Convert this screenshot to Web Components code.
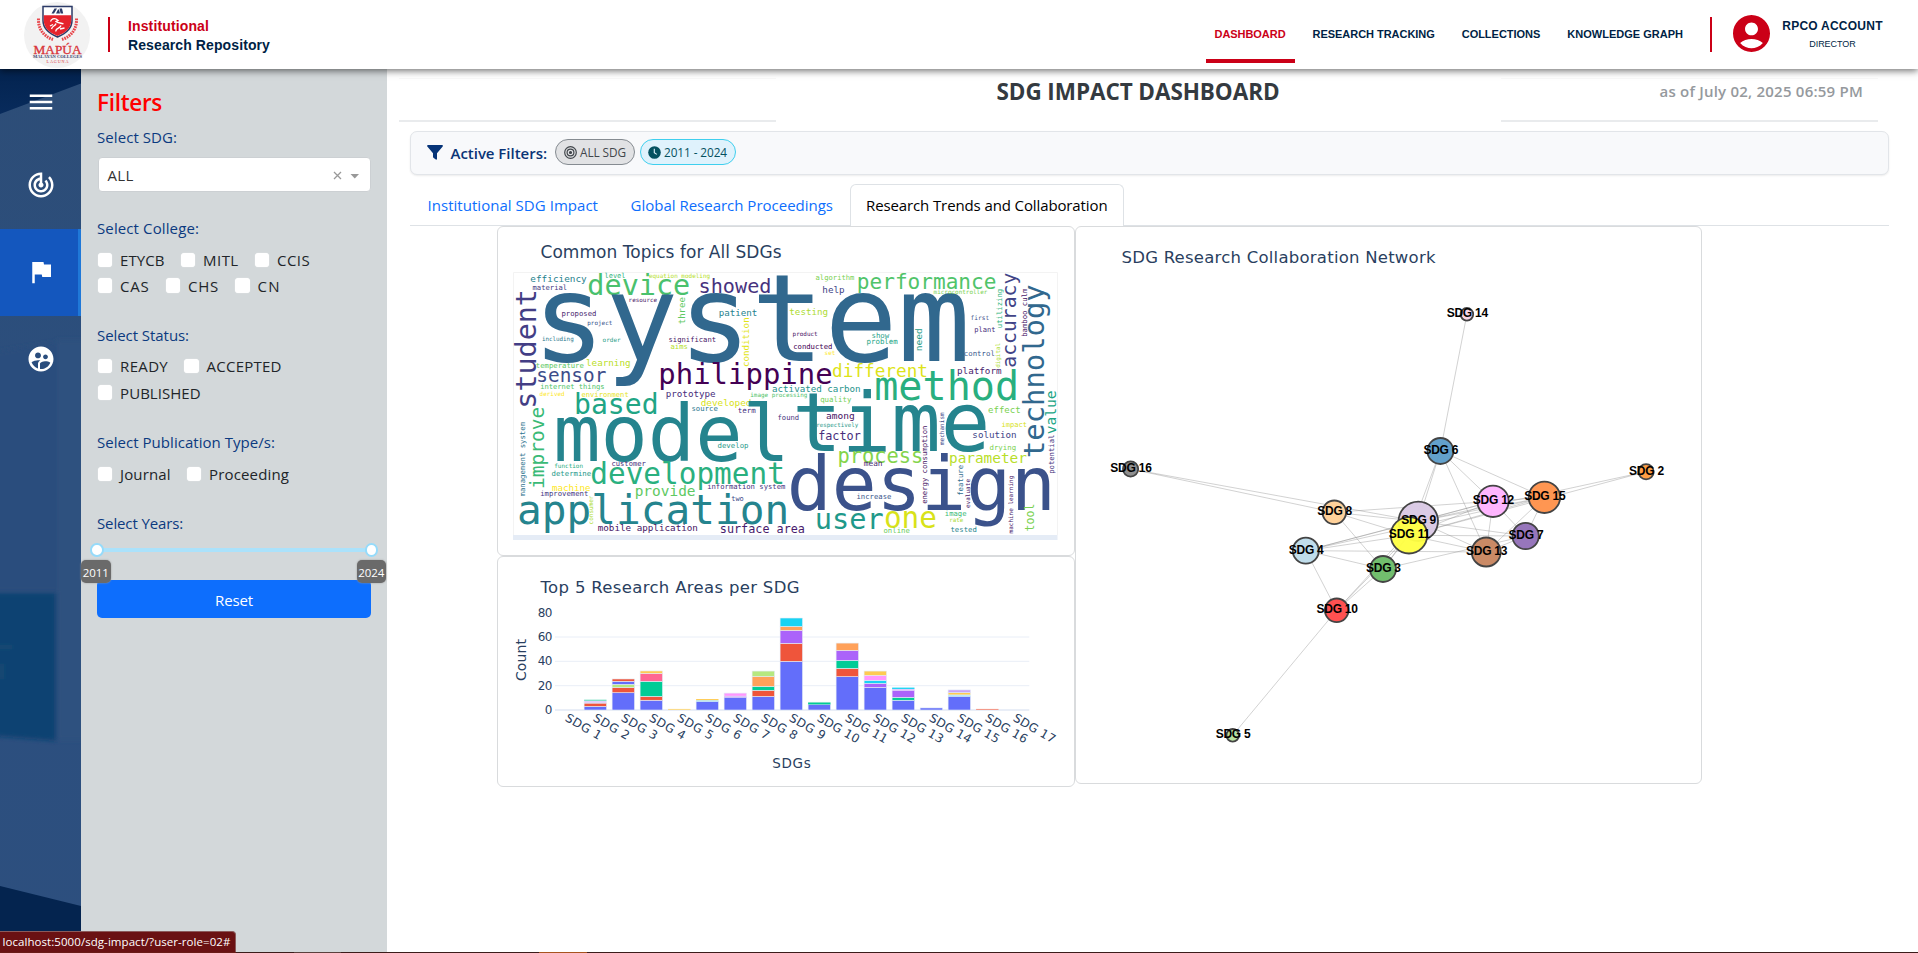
<!DOCTYPE html>
<html lang="en">
<head>
<meta charset="utf-8">
<title>SDG Impact Dashboard</title>
<style>
html,body{margin:0;height:100%;overflow:hidden;background:#fff;font-family:"Open Sans","Noto Sans",sans-serif}
</style>
</head>
<body>
<app-shell></app-shell>
<script>
const define = (name, html, after) => customElements.define(name, class extends HTMLElement {
  connectedCallback() {
    if (this.shadowRoot) return;
    const t = document.createElement('template');
    t.innerHTML = html;
    this.attachShadow({mode: 'open'}).append(t.content.cloneNode(true));
    if (after) after.call(this, this.shadowRoot);
  }
});

/* Label tracked to an exact width given in w. */
define('fit-text', `<style>:host{display:inline-block;white-space:nowrap}</style><slot></slot>`, function () {
  const w = +this.getAttribute('w');
  if (w) {
    this.style.letterSpacing = (w - this.getBoundingClientRect().width) / this.textContent.length + 'px';
    this.style.width = w + 'px';
  }
});

define('brand-logo', `<style>:host{display:block;width:66px;height:69px;overflow:hidden}svg{display:block}</style>
<svg width="66" height="69" viewBox="24 0 66 69">
<circle cx="57" cy="35" r="33" fill="#f2f2f2"/>
<path d="M43 6.500h29v14c0 8-6 13-14.500 16.500C49 33.500 43 28.500 43 20.500z" fill="#fff" stroke="#2b3a67" stroke-width="1.500"/>
<path d="M43.800 15.300h27.400v5.500c0 7-5.400 11.800-13.700 15.200-8.300-3.400-13.700-8.200-13.700-15.200z" fill="#e5232c"/>
<path d="M51.500 13.500l3-5h2.500l-3 5zM56 13.500l2-4h1l1 4zM59.500 8.500h2.500l1.200 5h-2.600z" fill="#2b3a67"/>
<path d="M50.500 21.500c1-2.500 3.500-3.500 5.500-2.500l2 1.500-2 1c2 2 5 1 7.500 2.500M51.500 29c1-3.500 4-3 4.500-5.500M56 31.500c-1-3.500 4-2.500 5-6M60 29l4.500-1M53 24.500l-3 1.500" fill="none" stroke="#fff" stroke-width="1.300"/>
<g fill="none" stroke="#e8474c" stroke-width="3" stroke-dasharray="1.700 .9"><path d="M38.500 18.500c-.5 9 4 17.500 14.500 21"/><path d="M76.500 18.500c.5 9-4 17.500-14.500 21"/></g>
<text x="33.500" y="53.500" font-family="Liberation Serif" font-size="12.500" fill="#d8343a" stroke="#d8343a" stroke-width=".3" textLength="48" lengthAdjust="spacingAndGlyphs">MAPÚA</text>
<text x="33" y="58.300" font-family="Liberation Serif" font-size="5" font-weight="bold" fill="#39446d" textLength="49" lengthAdjust="spacingAndGlyphs">MALAYAN COLLEGES</text>
<text x="46.500" y="62.500" font-family="Liberation Serif" font-size="4.200" fill="#d8343a" textLength="22">LAGUNA</text>
</svg>`);

define('top-bar', `<style>
:host{display:flex;height:69px;box-sizing:border-box;align-items:flex-start;background:#fff;box-shadow:0 2px 7px rgba(0,0,0,.55);position:relative;z-index:2;font-family:"Liberation Sans",Arial,sans-serif;color:#001f45;padding-left:24px}
.bar{width:2px;height:35px;background:#cb0017;margin-top:17px}
.brand{margin:17px 0 0 18px;font-weight:700;font-size:14px;line-height:19px;display:flex;flex-direction:column;align-items:flex-start}
.brand .r{color:#cb0017}
nav{margin-left:auto;display:flex;gap:9px;font-size:11px;font-weight:700;line-height:69px;height:69px}
nav a{padding:0 9px;height:59px}
nav a.on{color:#cb0017;border-bottom:4px solid #cb0017}
.who{margin:17px 35px 0 12px;width:101px;text-align:center;line-height:18px;display:flex;flex-direction:column;align-items:center}
</style>
<brand-logo></brand-logo><div class="bar" style="margin-left:18px"></div>
<div class="brand"><fit-text class="r" w="81">Institutional</fit-text><fit-text w="142">Research Repository</fit-text></div>
<nav><a class="on"><fit-text w="71">DASHBOARD</fit-text></a><a><fit-text w="122.200">RESEARCH TRACKING</fit-text></a><a><fit-text w="78.600">COLLECTIONS</fit-text></a><a><fit-text w="115.700">KNOWLEDGE GRAPH</fit-text></a></nav>
<div class="bar" style="margin-left:17.500px"></div>
<svg style="margin:15px 0 0 21.500px" width="37" height="37" viewBox="2 2 20 20"><path fill="#cb0017" d="M12 2C6.480 2 2 6.480 2 12s4.480 10 10 10 10-4.480 10-10S17.520 2 12 2zm0 4c1.930 0 3.500 1.570 3.500 3.500S13.930 13 12 13s-3.500-1.570-3.500-3.500S10.070 6 12 6zm0 14c-2.030 0-4.430-.820-6.140-2.880C7.550 15.800 9.680 15 12 15s4.450.8 6.140 2.120C16.430 19.180 14.030 20 12 20z"/></svg>
<div class="who"><fit-text style="font-size:12px;font-weight:700" w="100.500">RPCO ACCOUNT</fit-text><fit-text style="font-size:9px" w="46.500">DIRECTOR</fit-text></div>`);

define('rail-item', `<style>
:host{display:flex;height:87px;width:81px;box-sizing:border-box;align-items:center;justify-content:center;fill:#fff}
:host([active]){background:#1457be;border-right:3px solid #1f78d8}
</style><svg width="30" height="30" viewBox="0 0 24 24"><path></path></svg>`, function (r) {
  r.querySelector('path').setAttribute('d', this.getAttribute('d'));
});

define('side-rail', `<style>
:host{display:flex;flex-direction:column;width:81px;position:relative;overflow:hidden;background:#2c4f7b}
.bg{position:absolute;inset:0}
rail-item{position:relative}
</style>
<svg class="bg" width="81" height="884" viewBox="0 69 81 884">
<defs><linearGradient id="t" x2="0" y2="1"><stop offset="0" stop-color="#03234f"/><stop offset="1" stop-color="#082b5c"/></linearGradient>
<linearGradient id="m" x2="0" y2="1"><stop offset="0" stop-color="#2d4d77"/><stop offset=".5" stop-color="#2b4f7f"/><stop offset="1" stop-color="#2d4f7e"/></linearGradient>
<filter id="b"><feGaussianBlur stdDeviation="2"/></filter></defs>
<rect y="69" width="81" height="884" fill="url(#m)"/>
<g filter="url(#b)"><path d="M-5 352l62-10v250H-5z" fill="#2a4e7d"/><path d="M57 340h30v400H57z" fill="#2f517f"/><path d="M-5 593h61v148L-5 736z" fill="#0f4272"/><path d="M-2 645h14v4H-2zM-2 664h6v15h-6z" fill="#174972"/></g>
<path d="M0 69h81v14.500L0 114z" fill="url(#t)"/><path d="M0 886l81 20v47H0z" fill="#04244f"/>
</svg>
<rail-item style="height:66px" d="M3 18h18v-2H3v2zm0-5h18v-2H3v2zm0-7v2h18V6H3z"></rail-item>
<rail-item style="height:94px;padding:6px 0 0 1px" d="M19.070 4.930l-1.410 1.410C19.100 7.790 20 9.790 20 12c0 4.420-3.580 8-8 8s-8-3.580-8-8c0-4.080 3.050-7.440 7-7.930v2.020C8.160 6.570 6 9.030 6 12c0 3.310 2.690 6 6 6s6-2.690 6-6c0-1.660-.670-3.160-1.760-4.240l-1.410 1.410C15.550 9.900 16 10.900 16 12c0 2.210-1.790 4-4 4s-4-1.790-4-4c0-1.860 1.280-3.410 3-3.860v2.140c-.6.350-1 .980-1 1.720 0 1.100.9 2 2 2s2-.9 2-2c0-.740-.4-1.380-1-1.720V2h-1C6.480 2 2 6.480 2 12s4.480 10 10 10 10-4.480 10-10c0-2.760-1.120-5.260-2.930-7.070z"></rail-item>
<rail-item active style="padding:0 0 1px 4px" d="M14.400 6L14 4H5v17h2v-7h5.600l.4 2h7V6z"></rail-item>
<rail-item style="padding:0 0 1px 1px" d="M11.990 2c-5.520 0-10 4.480-10 10s4.480 10 10 10 10-4.480 10-10-4.480-10-10-10zm3.610 6.340c1.070 0 1.930.860 1.930 1.930 0 1.070-.860 1.930-1.930 1.930-1.070 0-1.930-.860-1.930-1.930-.010-1.070.860-1.930 1.930-1.930zm-6-1.580c1.300 0 2.360 1.060 2.360 2.360 0 1.300-1.060 2.360-2.360 2.360s-2.360-1.060-2.360-2.360c0-1.310 1.050-2.360 2.360-2.360zm0 9.130v3.750c-2.400-.750-4.300-2.600-5.140-4.960 1.050-1.120 3.670-1.690 5.140-1.690.530 0 1.200.080 1.900.220-1.640.870-1.900 2.020-1.900 2.680zM11.990 20c-.270 0-.530-.010-.790-.040v-4.070c0-1.420 2.940-2.130 4.400-2.130 1.070 0 2.920.390 3.840 1.150-1.170 2.970-4.060 5.090-7.450 5.090z"></rail-item>`);

define('check-item', `<style>
:host{display:flex;align-items:center;gap:8px;margin-right:16px;color:#212529}
i{width:14.500px;height:14.500px;box-sizing:border-box;background:#fff;border-radius:3.500px;box-shadow:0 0 1px #fff}
</style><i></i><fit-text></fit-text>`, function (r) {
  const f = r.querySelector('fit-text'), n = document.createElement('fit-text');
  n.setAttribute('w', this.getAttribute('w')); n.textContent = this.getAttribute('label'); f.replaceWith(n);
});

define('filter-panel', `<style>
:host{display:block;width:306px;box-sizing:border-box;background:#d3d8da;padding:19px 16px 0;font-size:15px}
h2{margin:0;font-size:22.500px;line-height:30px;font-weight:600;color:#f00}
label{display:block;height:24px;line-height:24px;color:#0b3a80;margin-top:24px}
.row{display:flex;height:26px;align-items:center;padding-left:.6px}
.sel{display:flex;align-items:center;height:35px;box-sizing:border-box;margin:8px 0 0 .5px;width:273px;border:1px solid #ccd0d3;border-radius:4px;background:#fff;color:#333;padding:0 10.500px 0 9px}
.slider{position:relative;height:45px}
.track{position:absolute;left:0;right:0;top:13px;height:3.500px;background:#abe2fb}
.h{position:absolute;top:8px;width:9.500px;height:9.500px;border:2px solid #96dbfa;border-radius:50%;background:#fff}
.tip{position:absolute;top:24.500px;width:29.500px;height:23.500px;background:#6a6a6a;border-radius:5px;color:#fff;font-size:11.500px;line-height:25px;text-align:center;z-index:1;box-shadow:0 0 2px #999}
button{display:block;width:274px;height:38px;border:0;border-radius:5px;background:#0d6efd;color:#fff;font:15px "Open Sans";padding-top:2px}
</style>
<h2><fit-text w="65">Filters</fit-text></h2>
<label style="margin-top:7px"><fit-text w="80">Select SDG:</fit-text></label>
<div class="sel"><fit-text w="26">ALL</fit-text>
<svg style="margin-left:auto" width="26" height="12" viewBox="0 0 26 12"><path d="M1 3l7 7M8 3l-7 7" stroke="#999" stroke-width="1.300"/><path d="M17.500 5h8.500l-4.250 4.500z" fill="#999"/></svg></div>
<label><fit-text w="102">Select College:</fit-text></label>
<div class="row" style="margin-top:7px"><check-item label="ETYCB" w="44.500"></check-item><check-item label="MITL" w="35.500"></check-item><check-item label="CCIS" w="33"></check-item></div>
<div class="row" style="height:25px"><check-item label="CAS" w="29.500"></check-item><check-item label="CHS" w="31"></check-item><check-item label="CN" w="23"></check-item></div>
<label style="margin-top:25px"><fit-text w="92">Select Status:</fit-text></label>
<div class="row" style="margin-top:6px"><check-item label="READY" w="48"></check-item><check-item label="ACCEPTED" w="75"></check-item></div>
<div class="row" style="height:27px"><check-item label="PUBLISHED" w="80.500"></check-item></div>
<label><fit-text w="178">Select Publication Type/s:</fit-text></label>
<div class="row" style="margin-top:7px"><check-item label="Journal" w="50.500"></check-item><check-item label="Proceeding" w="80"></check-item></div>
<label><fit-text w="86">Select Years:</fit-text></label>
<div class="slider"><div class="track"></div><div class="h" style="left:-7px"></div><div class="h" style="right:-7px"></div>
<div class="tip" style="left:-16px"><fit-text w="26">2011</fit-text></div><div class="tip" style="right:-15px"><fit-text w="26">2024</fit-text></div></div>
<button><fit-text w="38">Reset</fit-text></button>`);

define('filter-pill', `<style>
:host{display:flex;align-items:center;box-sizing:border-box;height:26px;border:1.300px solid var(--line);background:var(--fill);color:var(--ink);border-radius:13px;font-size:11.800px}
</style><slot></slot>`);

define('active-filters', `<style>
:host{display:flex;align-items:center;box-sizing:border-box;height:43.500px;background:#f8f9fb;border:1px solid #e2e5e9;border-radius:7px;margin:9.500px 29.500px 0 23px;padding:0 0 1px 15.500px;box-shadow:0 1px 2px rgba(0,0,0,.08)}
b{font-weight:600;font-size:15px;color:#0a3476;margin:1px 8px 0 8px}
svg{display:block}
</style>
<svg width="16" height="15" viewBox="0 0 16 15"><path fill="#063478" d="M1 0h14q1.400.3.700 1.600L10 8.300V14q-.3 1-1.200.6L6.400 12.700 6 12V8.300L.3 1.600Q-.3.300 1 0z"/></svg>
<b><fit-text w="96.500">Active Filters:</fit-text></b>
<filter-pill style="--line:#858b91;--fill:#e1e2e4;--ink:#41464b;width:80px;padding-left:8px;gap:3px"><svg width="13" height="13" viewBox="0 0 13 13" fill="none" stroke="#41464b" stroke-width="1.200"><circle cx="6.500" cy="6.500" r="5.800"/><circle cx="6.500" cy="6.500" r="3.400"/><circle cx="6.500" cy="6.500" r="1" fill="#41464b"/></svg><fit-text w="46">ALL SDG</fit-text></filter-pill>
<filter-pill style="--line:#3fcfee;--fill:#dff2fc;--ink:#055160;width:96px;margin-left:4.500px;padding-left:7.500px;gap:3px"><svg width="13" height="13" viewBox="0 0 13 13"><circle cx="6.500" cy="6.500" r="6.300" fill="#055160"/><path d="M6.300 2.800v4l2.500 1.600" fill="none" stroke="#dff2fc" stroke-width="1.100"/></svg><fit-text w="63">2011 - 2024</fit-text></filter-pill>`);

define('tab-strip', `<style>
:host{display:flex;box-sizing:border-box;height:42px;margin:9.500px 29.500px 0 23px;border-bottom:1px solid #dee2e6;font-size:15px;line-height:42px;color:#0d6efd}
span{padding:0 16.500px 0 17.500px}
.on{color:#000;background:#fff;border:1px solid #dee2e6;border-bottom:0;border-radius:6px 6px 0 0;padding:0 15px 0 15.500px;height:42px;box-sizing:border-box;line-height:40px}
</style><span><fit-text w="170.500">Institutional SDG Impact</fit-text></span><span style="padding-left:16px"><fit-text w="202.500">Global Research Proceedings</fit-text></span><span class="on"><fit-text w="241.500">Research Trends and Collaboration</fit-text></span>`);

define('chart-card', `<style>
:host{display:block;box-sizing:border-box;border:1px solid #d9dbdd;border-radius:6px;overflow:hidden;background:#fff}
</style><slot></slot>`);

const NS = 'http://www.w3.org/2000/svg';
const el = (p, tag, attrs, text) => {
  const e = document.createElementNS(NS, tag);
  for (const k in attrs) e.setAttribute(k, attrs[k]);
  if (text !== undefined) e.textContent = text;
  p.append(e);
  return e;
};
const chartStyle = `<style>:host{display:block}svg{display:block}text{font-family:"DejaVu Sans",Verdana,sans-serif;fill:#2a3f5f}</style>`;

/* Word: [text, start, end, baseline, colour, vertical]; three units to a pixel, one list per quadrant. */
const CLOUD = [
 [-39,-141,[
 ['efficiency',93,258,172,'#26828e'],['material',99,200,194,'#443a83'],['device',268,565,209,'#4ac16d'],['level',315,375,160,'#2fb47c'],
 ['equation modeling',448,630,158,'#b5de2b'],['showed',600,810,203,'#46327e'],['system',122,1386,409,'#31688e'],['student',198,545,107,'#433e85',1],
 ['proposed',186,288,272,'#481f70'],['project',263,336,299,'#39568c'],['resource',387,470,230,'#471365'],['three',218,296,554,'#5ec962',1],
 ['patient',658,770,274,'#26828e'],['including',127,220,348,'#2a788e'],['order',309,361,350,'#1fa088'],['significant',507,647,350,'#471365'],
 ['aims',513,562,371,'#b5de2b'],['condition',279,424,747,'#e2e418',1],['temperature',109,250,429,'#5ec962'],['learning',260,390,423,'#bade28'],
 ['sensor',113,315,470,'#3d4d8a'],['philippine',481,992,477,'#440154'],['internet things',122,312,492,'#50c46a']]],
 [801,-141,[
 ['algorithm',108,222,166,'#7ad151'],['help',129,192,203,'#414487'],['performance',235,645,191,'#50c46a'],['microcontroller',462,621,207,'#7ad151'],
 ['testing',30,142,271,'#addc30'],['first',573,626,284,'#3d4e8a'],['utilizing',193,308,667,'#2fb47c',1],['accuracy',147,424,707,'#414487',1],
 ['bamboo culm',192,334,742,'#481668',1],['technology',184,693,792,'#31688e',1],['plant',584,645,320,'#472d7b'],['product',39,112,333,'#471365'],
 ['show',276,326,338,'#1fa188'],['problem',261,352,358,'#21a585'],['need',312,377,426,'#1e9c89',1],['conducted',41,156,373,'#440154'],
 ['set',135,165,389,'#fde725'],['control',553,643,394,'#38588c'],['digital',355,427,660,'#addc30',1],['platform',533,663,448,'#481b6d'],
 ['different',160,440,455,'#dde318'],['method',291,709,526,'#29af7f']]],
 [-39,324,[
 ['derived',120,193,47,'#fde725'],['environment',246,385,50,'#e5e419'],['based',228,470,102,'#21a585'],['prototype',499,645,51,'#472d7b'],
 ['activated carbon',818,1080,35,'#1f948c'],['image processing',752,921,52,'#50c46a'],['developed',604,753,79,'#d8e219'],['source',576,652,92,'#2a768e'],
 ['term',715,766,100,'#46327e'],['found',834,896,119,'#46327e'],['model',176,853,243,'#25848e'],['improve',84,323,132,'#3aba76',1],
 ['management system',127,348,75,'#2c728e',1],['develop',654,744,203,'#1f998a'],['function',164,248,263,'#26ad81'],['determine',156,272,289,'#1f998a'],
 ['customer',336,436,259,'#472d7b'],['development',277,849,312,'#2ab07f'],['machine',158,270,333,'#fde725'],['improvement',122,264,348,'#443983'],
 ['provide',407,584,347,'#5ec962'],['information system',623,855,326,'#46327e'],['application',60,859,431,'#25848e'],['consumer',348,432,278,'#addc30',1],
 ['two',695,730,364,'#3e4989'],['mobile application',295,592,454,'#471365'],['surface area',662,913,459,'#481b6d']]],
 [801,324,[
 ['time',54,614,213,'#25848e'],['quality',122,213,67,'#73d056'],['effect',626,720,100,'#7ad151'],['among',140,222,116,'#471365'],
 ['respectively',110,234,141,'#1f998a'],['impact',666,740,140,'#d8e219'],['factor',117,240,180,'#472d7b'],['mechanism',98,194,492,'#3e4989',1],
 ['solution',579,708,174,'#414487'],['drying',630,707,209,'#7ad151'],['potential',165,280,823,'#46327e',1],['value',34,160,828,'#21a585',1],
 ['process',177,426,248,'#84d44b'],['parameter',510,738,250,'#b8de29'],['mean',253,306,259,'#481f70'],['energy consumption',138,370,441,'#471365',1],
 ['design',36,812,389,'#3b528b'],['feature',256,346,549,'#2f6c8e',1],['evaluate',298,383,570,'#481668',1],['increase',231,333,357,'#39568c'],
 ['user',110,305,448,'#1f998a'],['one',318,465,444,'#d8e219'],['image',496,558,408,'#3aba76'],['rate',509,549,426,'#a8db34'],
 ['online',312,388,459,'#6ccd5a'],['tested',513,589,456,'#25848e'],['machine learning',288,459,699,'#481668',1],['tool',373,452,763,'#7ad151',1]]]
];
define('word-cloud', chartStyle + `<style>.w text{font-family:"DejaVu Sans Mono",monospace}</style>
<svg width="576" height="328" viewBox="498 227 576 328">
<text x="540.500" y="258" font-size="17" textLength="241">Common Topics for All SDGs</text>
<path d="M513.500 535V272.500H1057.500V535" fill="none" stroke="#f3f3f3"/><rect x="513" y="535" width="544.500" height="5" fill="#e5ecf6"/>
<g class="w" transform="translate(513 272) scale(.33333)"></g></svg>`, r => {
  const g = r.querySelector('.w');
  for (const [dx, dy, words] of CLOUD) {
    const q = el(g, 'g', {transform: `translate(${dx} ${dy})`});
    for (const [t, a, b, base, fill, v] of words) {
      const size = (b - a) / (t.length * .602 - .14), pad = .07 * size;
      el(q, 'text', {'font-size': size.toFixed(1), style: 'fill:' + fill,
        transform: v ? `translate(${base} ${b + pad}) rotate(-90)` : `translate(${a - pad} ${base})`}, t);
    }
  }
});

/* Stacks from the base upwards: colour and value. */
const C = {b:'#636efa', r:'#ef553b', g:'#00cc96', p:'#ab63fa', o:'#ffa15a', c:'#19d3f3', k:'#ff6692', l:'#b6e880', m:'#ff97ff', y:'#fecb52',
  P:'#dfc8fb', G:'#74ddc0', C:'#b4e8f8', Y:'#fbdc8b', R:'#f39a8b', V:'#c9a4f8'};
const STACKS = ['', 'b3 r2.700 P1.800 G1', 'b14.200 r4.400 l2.500 b2.500 r1.900', 'b8 r3.200 g12.400 k6.500 y2', 'Y.9', 'b7 C1.100 y.9', 'b10.300 V1.100 m2.500',
  'b11.200 r5 g3.200 o8.200 l4.400', 'b40 r14.800 p10.600 o3.300 c6.900', 'b4.600 g1.200 G.8', 'b27.400 r6.800 g6.600 p8.200 o6', 'b18.600 p3.300 c2.500 m4.100 y3.500',
  'b8 g2.400 p5.800 P1.100 c1.100', 'b1.700', 'b11.200 C1.200 y1.900 V2.200', 'R.9', ''];
define('area-bars', chartStyle + `<svg width="576" height="229" viewBox="498 557 576 229">
<text x="540.500" y="593" font-size="16.500" textLength="259">Top 5 Research Areas per SDG</text>
<text transform="translate(526 681) rotate(-90)" font-size="14" textLength="42">Count</text>
<text x="791.500" y="768" font-size="13.500" text-anchor="middle" textLength="38.500">SDGs</text><g></g></svg>`, r => {
  const g = r.querySelector('g'), k = 1.2167;
  for (let v = 0; v <= 80; v += 20) {
    const y = 710 - v * k;
    if (v < 80) el(g, 'path', {d: `M555 ${y.toFixed(1)}H1029.300`, stroke: '#e9eef7', 'stroke-width': v ? 1 : 1.800});
    el(g, 'text', {x: 552.500, y: y + 4, 'font-size': 12, 'text-anchor': 'end', textLength: v ? 14.800 : 7.400}, v);
  }
  STACKS.forEach((s, i) => {
    const cx = 567.3 + i * 28;
    let y = 710;
    for (const part of s ? s.split(' ') : []) {
      const h = parseFloat(part.slice(1)) * k;
      y -= h;
      el(g, 'rect', {x: cx - 11.200, y, width: 22.400, height: h, fill: C[part[0]], stroke: '#e5ecf6', 'stroke-width': h < 1.5 ? 0 : .6});
    }
    el(g, 'text', {transform: `translate(${cx - 3} 720.300) rotate(30)`, 'font-size': 12, textLength: i > 8 ? 46.500 : 39.500}, 'SDG ' + (i + 1));
  });
});

const NODES = {14:[1466.900,314.300,6.300,'#f9d3e6'],6:[1440.400,451,13,'#5d9dca'],16:[1130.600,469,7.600,'#8a8a8a'],2:[1646.100,471.700,7.600,'#ff9a3c'],15:[1544.400,497.300,15.700,'#ff924b'],
 12:[1493,501.300,15.700,'#ffb3ff'],8:[1334.300,512.300,11.800,'#ffcf96'],9:[1418.300,521.300,19.700,'#dac9e4'],4:[1305.800,550.700,13,'#bddcea'],13:[1486.200,552,14.500,'#c88560'],
 7:[1525.600,536,13.200,'#9370b8'],3:[1383,569,13,'#6cbb68'],10:[1336.700,610.300,11.800,'#ff4a4a'],5:[1232.700,735.300,6.300,'#b5e09a'],11:[1409,535.300,18.200,'#ffff44']};
const EDGES = '14-6 16-9 16-8 2-9 2-11 6-9 6-11 6-12 6-15 6-13 15-12 15-9 15-11 15-7 15-13 15-4 12-9 12-11 12-8 12-13 12-7 12-4 8-9 8-11 8-3 7-9 7-11 7-3 7-13 13-9 13-11 13-4 4-9 4-11 4-3 4-10 10-3 10-9 10-11 10-5 3-9 3-11';
define('sdg-network', chartStyle + `<style>.n text{font:bold 12px "Liberation Sans",Arial,sans-serif;fill:#000}</style>
<svg width="625" height="556" viewBox="1076 227 625 556"><text x="1121.500" y="263" font-size="16.500" textLength="314">SDG Research Collaboration Network</text><g class="n"></g></svg>`, r => {
  const g = r.querySelector('.n');
  for (const e of EDGES.split(' ')) {
    const [a, b] = e.split('-').map(i => NODES[i]);
    el(g, 'path', {d: `M${a[0]} ${a[1]}L${b[0]} ${b[1]}`, stroke: '#888', 'stroke-opacity': .38, 'stroke-width': 1});
  }
  for (const i of [14,6,16,2,15,12,8,9,4,13,7,3,10,5,11]) {
    const n = NODES[i];
    el(g, 'circle', {cx: n[0], cy: n[1], r: n[2], fill: n[3], stroke: '#444', 'stroke-width': 1.800, 'fill-opacity': .96});
  }
  for (const i in NODES) {
    const w = i > 9 ? 41.500 : 35;
    el(g, 'text', {x: NODES[i][0] + .5 - w / 2, y: NODES[i][1] + 2.800, textLength: w}, 'SDG ' + i);
  }
});

define('dash-main', `<style>
:host{display:flex;flex-direction:column;flex:1;min-width:0;background:#fff}
header{display:grid;grid-template-columns:377px 1fr 377px;margin:9px 40.500px 0 11.500px;height:43.500px}
header .s{border-top:1px solid #f8f8f8;border-bottom:2px solid #e9ebed;box-sizing:border-box;text-align:right;padding-right:14.500px;line-height:24px;font-size:15px;font-weight:600;color:#95999d}
h1{margin:0;font-size:22.500px;line-height:27px;color:#343a40;text-align:center}
.cards{display:grid;grid-template-columns:577.500px 627px;margin-left:110px;align-items:start}
.col{display:flex;flex-direction:column}
</style>
<header><div class="s"></div><h1><fit-text w="283">SDG IMPACT DASHBOARD</fit-text></h1><div class="s"><fit-text w="203.500">as of July 02, 2025 06:59 PM</fit-text></div></header>
<active-filters></active-filters><tab-strip></tab-strip>
<div class="cards"><div class="col"><chart-card style="height:330px"><word-cloud></word-cloud></chart-card><chart-card style="height:231px"><area-bars></area-bars></chart-card></div>
<chart-card style="height:558px"><sdg-network></sdg-network></chart-card></div>`);

define('status-tip', `<style>
:host{position:absolute;left:0;bottom:1px;z-index:3;box-sizing:border-box;width:236px;height:21px;background:#6a1113;border-top:1px solid #8b5a5b;border-right:1px solid #8b5a5b;border-radius:0 4px 0 0;color:#fff;font-size:11.500px;line-height:19px;padding-left:2.500px}
</style><fit-text w="228">localhost:5000/sdg-impact/?user-role=02#</fit-text>`);

define('app-shell', `<style>
:host{display:flex;flex-direction:column;height:953px;position:relative}
.body{display:flex;height:883px}
.edge{height:1px;background:linear-gradient(90deg,#6a1b17 236px,#3b1c1a 236px 294px,#5a403c 294px 341px,#3b1c1a 341px 539px,#a8541f 539px 587px,#3b1c1a 587px)}
</style><top-bar></top-bar><div class="body"><side-rail></side-rail><filter-panel></filter-panel><dash-main></dash-main></div><div class="edge"></div><status-tip></status-tip>`);
</script>
</body>
</html>
